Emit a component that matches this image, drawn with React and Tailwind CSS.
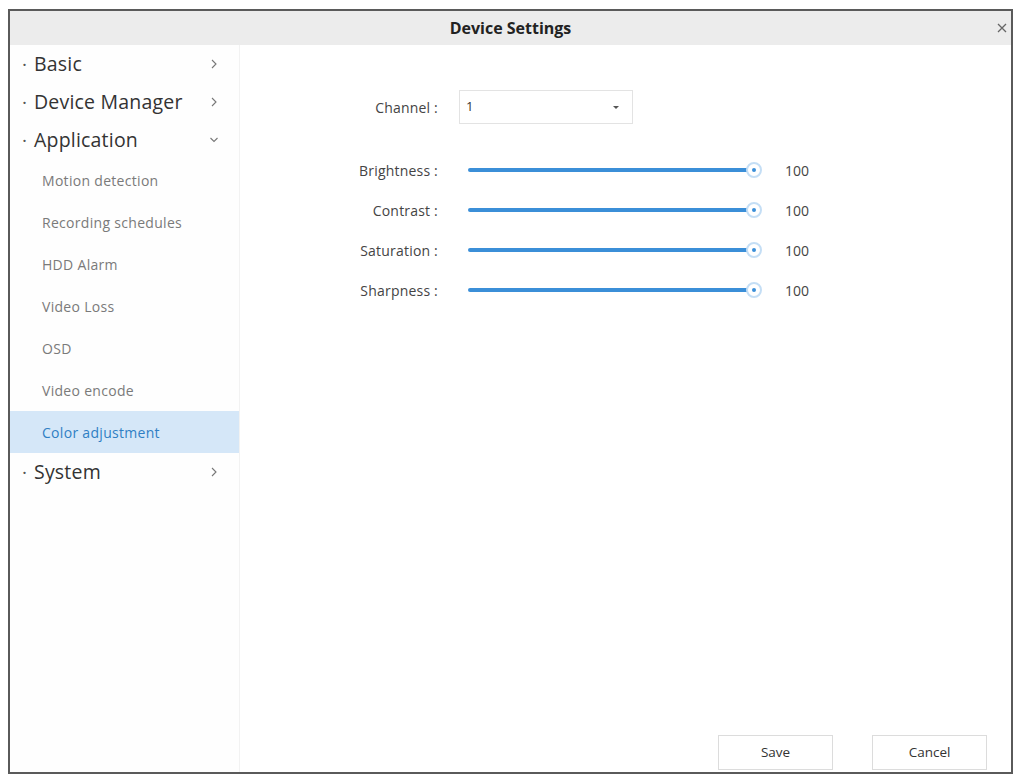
import React from "react";

const font = { fontFamily: '"Open Sans", "Noto Sans", "Liberation Sans", sans-serif' };

function Chevron({ down }) {
  return (
    <svg width="10" height="10" viewBox="0 0 10 10" className="text-[#777]">
      {down ? (
        <path d="M1.5 3 L5 6.5 L8.5 3" fill="none" stroke="currentColor" strokeWidth="1.1" />
      ) : (
        <path d="M3 1 L7 5 L3 9" fill="none" stroke="currentColor" strokeWidth="1.1" />
      )}
    </svg>
  );
}

function TopItem({ label, down }) {
  return (
    <div className="h-[38px] flex items-center pl-[12px] pr-[20px]">
      <span className="text-[#555] text-[19px] w-[12px]">·</span>
      <span className="text-[#333] text-[19.5px] tracking-[0.2px] flex-1">{label}</span>
      <Chevron down={down} />
    </div>
  );
}

function SubItem({ label, active }) {
  return (
    <div
      className={
        "h-[42px] flex items-center pl-[32px] text-[14px] tracking-[0.3px] " +
        (active ? "bg-[#d5e7f8] text-[#2f7fc4]" : "text-[#7a7a7a]")
      }
    >
      {label}
    </div>
  );
}

function SliderRow({ label }) {
  return (
    <div className="h-[40px] flex items-center">
      <div className="w-[198px] text-right text-[14px] tracking-[0.2px] text-[#444]">{label}</div>
      <div className="ml-[30px] w-[294px] h-[16px] relative flex items-center">
        <div className="w-[286px] h-[4px] rounded-full bg-[#3b8fd8]" />
        <div className="absolute right-0 top-0 w-[16px] h-[16px] rounded-full bg-white border-2 border-[#c4def5] flex items-center justify-center">
          <div className="w-[4px] h-[4px] rounded-full bg-[#3b8fd8]" />
        </div>
      </div>
      <div className="ml-[23px] text-[14px] text-[#444]">100</div>
    </div>
  );
}

export default function App() {
  return (
    <div className="w-[1020px] h-[776px] bg-white pt-[9px] pl-[8px]" style={font}>
      <div className="w-[1005px] h-[765px] border-2 border-[#5a5a5a] flex flex-col bg-white">
        <div className="h-[34px] bg-[#ececec] flex items-center relative shrink-0">
          <div className="flex-1 text-center text-[16px] font-bold text-[#222]">Device Settings</div>
          <svg className="absolute right-[3px] top-[11px]" width="12" height="12" viewBox="0 0 12 12">
            <path d="M2 2 L10 10 M10 2 L2 10" stroke="#666" strokeWidth="1.3" />
          </svg>
        </div>
        <div className="flex flex-1">
          <div className="w-[230px] border-r border-[#f2f2f2] bg-[#fefefe]">
            <TopItem label="Basic" />
            <TopItem label="Device Manager" />
            <TopItem label="Application" down />
            <SubItem label="Motion detection" />
            <SubItem label="Recording schedules" />
            <SubItem label="HDD Alarm" />
            <SubItem label="Video Loss" />
            <SubItem label="OSD" />
            <SubItem label="Video encode" />
            <SubItem label="Color adjustment" active />
            <TopItem label="System" />
          </div>
          <div className="flex-1 flex flex-col pt-[45px]">
            <div className="flex items-center h-[34px]">
              <div className="w-[198px] text-right text-[14px] tracking-[0.2px] text-[#444]">Channel :</div>
              <div className="ml-[21px] w-[174px] h-[34px] border border-[#e3e3e3] flex items-center justify-between pl-[6px] pr-[12px] text-[13px] text-[#333]">
                <span>1</span>
                <svg width="8" height="5" viewBox="0 0 8 5">
                  <path d="M1 1 L7 1 L4 4 Z" fill="#555" />
                </svg>
              </div>
            </div>
            <div className="mt-[26px]">
              <SliderRow label="Brightness :" />
              <SliderRow label="Contrast :" />
              <SliderRow label="Saturation :" />
              <SliderRow label="Sharpness :" />
            </div>
            <div className="flex-1" />
            <div className="flex justify-end gap-[39px] pr-[24px] pb-[2px]">
              <button className="w-[115px] h-[35px] border border-[#dcdcdc] bg-white text-[13.5px] text-[#333]">Save</button>
              <button className="w-[115px] h-[35px] border border-[#dcdcdc] bg-white text-[13.5px] text-[#333]">Cancel</button>
            </div>
          </div>
        </div>
      </div>
    </div>
  );
}
